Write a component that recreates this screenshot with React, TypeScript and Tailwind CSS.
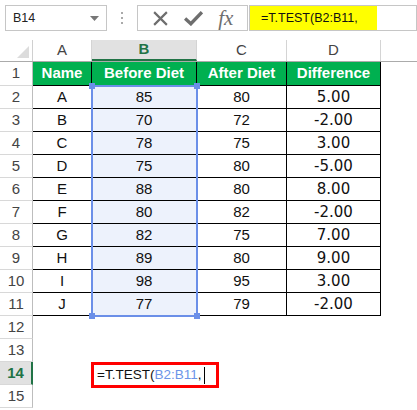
import React from "react";

const rows: [string, number, number, string][] = [
  ["A", 85, 80, "5.00"],
  ["B", 70, 72, "-2.00"],
  ["C", 78, 75, "3.00"],
  ["D", 75, 80, "-5.00"],
  ["E", 88, 80, "8.00"],
  ["F", 80, 82, "-2.00"],
  ["G", 82, 75, "7.00"],
  ["H", 89, 80, "9.00"],
  ["I", 98, 95, "3.00"],
  ["J", 77, 79, "-2.00"],
];

const font = { fontFamily: "'Liberation Sans', Arial, sans-serif" };

function RowHead({ n, active }: { n: number; active?: boolean }) {
  return (
    <div
      className={
        "w-[33px] shrink-0 flex items-center justify-center border-b border-[#d8d8d8] text-[15px] " +
        (active
          ? "bg-[#e1e1e1] text-[#217346] font-bold border-r-2 border-r-[#217346]"
          : "bg-white text-[#444] border-r border-r-[#bdbdbd]")
      }
    >
      {n}
    </div>
  );
}

export default function App() {
  return (
    <div className="w-[417px] h-[410px] overflow-hidden bg-white relative" style={font}>
      {/* formula bar */}
      <div className="h-[40px] flex items-start pt-[5px] pl-[5px]">
        <div className="w-[102px] h-[26px] border border-[#c6c6c6] flex items-center justify-between pl-[7px] pr-[7px] text-[12.5px] text-[#222]">
          <span>B14</span>
          <svg width="9" height="5" viewBox="0 0 9 5">
            <path d="M0 0 L9 0 L4.5 5 Z" fill="#777" />
          </svg>
        </div>
        <div className="w-[30px] h-[26px] flex flex-col items-center justify-center gap-[3px]">
          <div className="w-[2px] h-[2px] bg-[#aaa]" />
          <div className="w-[2px] h-[2px] bg-[#aaa]" />
          <div className="w-[2px] h-[2px] bg-[#aaa]" />
        </div>
        <div className="w-[111px] h-[26px] border border-[#c6c6c6] flex items-center justify-around px-[6px]">
          <svg width="17" height="17" viewBox="0 0 16 16">
            <path d="M2 2 L14 14 M14 2 L2 14" stroke="#6e6e6e" strokeWidth="2" />
          </svg>
          <svg width="19" height="15" viewBox="0 0 18 14">
            <path d="M1 7 L6.5 12 L17 1" stroke="#6e6e6e" strokeWidth="3.2" fill="none" />
          </svg>
          <span
            className="text-[21px] italic text-[#6e6e6e] leading-none"
            style={{ fontFamily: "'Liberation Serif', 'Times New Roman', serif" }}
          >
            fx
          </span>
        </div>
        <div className="flex-1 h-[26px] border border-[#c6c6c6] ml-[1px] flex">
          <div className="w-[127px] h-full bg-[#ffff00] flex items-center pl-[11px] text-[12.5px] text-[#111]">
            =T.TEST(B2:B11,
          </div>
        </div>
      </div>

      {/* column header row */}
      <div className="flex h-[22px] border-b border-[#ababab]">
        <div className="w-[33px] shrink-0 border-r border-[#d0d0d0] relative">
          <svg className="absolute right-[3px] bottom-[3px]" width="12" height="12" viewBox="0 0 12 12">
            <path d="M12 0 L12 12 L0 12 Z" fill="#dcdcdc" />
          </svg>
        </div>
        <div className="w-[59px] shrink-0 border-r border-[#d4d4d4] flex items-center justify-center text-[15px] text-[#444]">A</div>
        <div className="w-[105px] shrink-0 border-r border-[#d4d4d4] bg-[#e1e1e1] border-b-2 border-b-[#217346] flex items-center justify-center text-[15px] font-bold text-[#217346]">B</div>
        <div className="w-[90px] shrink-0 border-r border-[#d4d4d4] flex items-center justify-center text-[15px] text-[#444]">C</div>
        <div className="w-[94px] shrink-0 border-r border-[#d4d4d4] flex items-center justify-center text-[15px] text-[#444]">D</div>
        <div className="flex-1" />
      </div>

      {/* grid */}
      <div className="relative">
        {/* row 1 */}
        <div className="flex h-[24px]">
          <RowHead n={1} />
          <div className="w-[59px] shrink-0 bg-[#00b050] border-r border-b border-black flex items-center justify-center text-white font-bold text-[15px]">Name</div>
          <div className="w-[105px] shrink-0 bg-[#00b050] border-r border-b border-black flex items-center justify-center text-white font-bold text-[15px]">Before Diet</div>
          <div className="w-[90px] shrink-0 bg-[#00b050] border-r border-b border-black flex items-center justify-center text-white font-bold text-[15px]">After Diet</div>
          <div className="w-[94px] shrink-0 bg-[#00b050] border-r border-b border-black flex items-center justify-center text-white font-bold text-[15px]">Difference</div>
          <div className="flex-1" />
        </div>
        {rows.map((r, i) => (
          <div key={i} className="flex h-[23px]">
            <RowHead n={i + 2} />
            <div className="w-[59px] shrink-0 border-r border-b border-black flex items-center justify-center text-[15px] text-[#111]">{r[0]}</div>
            <div className="w-[105px] shrink-0 bg-[#edf2fc] border-r border-b border-black flex items-center justify-center text-[15px] text-[#111]">{r[1]}</div>
            <div className="w-[90px] shrink-0 border-r border-b border-black flex items-center justify-center text-[15px] text-[#111]">{r[2]}</div>
            <div
              className="w-[94px] shrink-0 border-r border-b border-black flex items-center justify-center text-[15px] text-[#111]"
              style={{ fontFamily: "'DejaVu Sans', Verdana, sans-serif" }}
            >
              {r[3]}
            </div>
            <div className="flex-1" />
          </div>
        ))}
        {[12, 13, 14, 15].map((n) => (
          <div key={n} className="flex h-[23px]">
            <RowHead n={n} active={n === 14} />
            <div className="w-[59px] shrink-0" />
            <div className="w-[105px] shrink-0 relative">
              {n === 14 && (
                <div className="absolute left-[-1px] top-0 w-[128px] h-[26px] border-[3px] border-[#ff0000] bg-white flex items-center pl-[3px] text-[13.5px] text-[#111] z-10">
                  <span>=T.TEST(</span>
                  <span className="text-[#6b94e8]">B2:B11</span>
                  <span>,</span>
                  <span className="w-[1px] h-[17px] bg-black ml-[3px]" />
                </div>
              )}
            </div>
            <div className="flex-1" />
          </div>
        ))}

        {/* selection overlay B2:B11 */}
        <div className="absolute left-[91px] top-[23px] w-[107px] h-[232px] border-2 border-[#6b8fe8] pointer-events-none">
          <div className="absolute left-[-4px] top-[-4px] w-[6px] h-[6px] bg-[#6b8fe8]" />
          <div className="absolute right-[-4px] top-[-4px] w-[6px] h-[6px] bg-[#6b8fe8]" />
          <div className="absolute left-[-4px] bottom-[-4px] w-[6px] h-[6px] bg-[#6b8fe8]" />
          <div className="absolute right-[-4px] bottom-[-4px] w-[6px] h-[6px] bg-[#6b8fe8]" />
        </div>
      </div>
    </div>
  );
}
